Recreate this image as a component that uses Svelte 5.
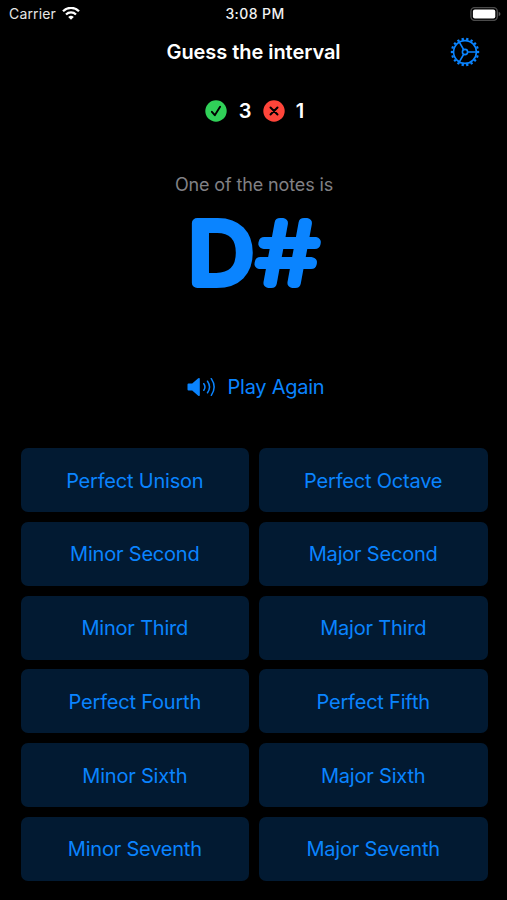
<script>
  const intervals = [
    'Perfect Unison', 'Perfect Octave',
    'Minor Second', 'Major Second',
    'Minor Third', 'Major Third',
    'Perfect Fourth', 'Perfect Fifth',
    'Minor Sixth', 'Major Sixth',
    'Minor Seventh', 'Major Seventh'
  ];
  const correct = 3;
  const wrong = 1;
  const teeth = Array.from({ length: 18 }, (_, i) => i * 20);
</script>

<main class="screen">
  <div class="status">
    <div class="carrier">
      <span>Carrier</span>
      <svg width="18" height="14" viewBox="0 0 18 14" fill="none" stroke="#fff" stroke-width="2.3">
        <path d="M1 4.2A11.3 11.3 0 0 1 17 4.2" />
        <path d="M4 7.5A7.1 7.1 0 0 1 14 7.5" />
        <path d="M9 12.8L6.2 10A4 4 0 0 1 11.8 10Z" fill="#fff" stroke="none" />
      </svg>
    </div>
    <time>3:08 PM</time>
    <svg class="battery" width="31" height="14" viewBox="0 0 31 14">
      <rect x="0.9" y="0.6" width="26.4" height="12.8" rx="3.8" fill="#000" stroke="#4b4b4b" stroke-width="1.4" />
      <rect x="2.9" y="2.5" width="22.4" height="9" rx="2" fill="#fff" />
      <path d="M28.7 4.8Q30.5 5.5 30.5 7T28.7 9.2Z" fill="#5a5a5a" />
    </svg>
  </div>

  <header>
    <h1>Guess the interval</h1>
    <button class="settings" aria-label="Settings">
      <svg width="30" height="30" viewBox="-15 -15 30 30" fill="none" stroke="#0a84ff" stroke-width="1.6">
        <circle r="11.4" />
        <circle r="2.6" />
        <path d="M2.6 0H11.6M-1.3 -2.25L-5.8 -10.05M-1.3 2.25L-5.8 10.05" />
        {#each teeth as angle}
          <path d="M12 0H14.2" stroke-width="2.3" transform="rotate({angle})" />
        {/each}
      </svg>
    </button>
  </header>

  <div class="score">
    <svg width="22" height="22" viewBox="0 0 22 22" fill="none">
      <circle cx="11" cy="11" r="10.7" fill="#30d158" />
      <path d="M6.9 11.8L9.8 15.2L15.1 6.8" stroke="#000" stroke-width="1.9" stroke-linecap="round" stroke-linejoin="round" />
    </svg>
    <span class="right">{correct}</span>
    <svg width="22" height="22" viewBox="0 0 22 22" fill="none">
      <circle cx="11" cy="11" r="10.7" fill="#ff453a" />
      <path d="M7.5 7.5L14.5 14.5M14.5 7.5L7.5 14.5" stroke="#000" stroke-width="2" stroke-linecap="round" />
    </svg>
    <span class="wrong">{wrong}</span>
  </div>

  <p class="hint">One of the notes is</p>

  <svg class="note" width="140" height="84" viewBox="0 0 140 84">
    <text transform="translate(4.8 71.5) scale(1.09 1)" class="letter">D</text>
    <text transform="translate(74 71.8) scale(1.13 1)" class="sharp">#</text>
  </svg>

  <button class="play">
    <svg width="30" height="22" viewBox="0 0 30 22" fill="none" stroke="#0a84ff" stroke-width="1.5" stroke-linecap="round">
      <path d="M1.5 7.4H5.2L11.2 2.3Q12.8 1.4 12.8 3V19Q12.8 20.6 11.2 19.7L5.2 14.6H1.5Q.5 14.6 .5 13.6V8.4Q.5 7.4 1.5 7.4Z" fill="#0a84ff" stroke="none" />
      <path d="M16.8 7.7Q19.1 11 16.8 14.3M20.5 5.2Q24.6 11 20.5 16.8M24.3 2.7Q30 11 24.3 19.3" />
    </svg>
    <span>Play Again</span>
  </button>

  <div class="grid">
    {#each intervals as name}
      <button class="choice">{name}</button>
    {/each}
  </div>
</main>

<style>
  :global(body) { margin: 0; background: #000; }
  .screen {
    width: 507px;
    height: 900px;
    overflow: hidden;
    background: #000;
    color: #fff;
    font-family: Inter, "Liberation Sans", sans-serif;
    display: flex;
    flex-direction: column;
    align-items: center;
  }
  button { border: 0; padding: 0; background: none; font: inherit; color: #0a84ff; }
  svg { display: block; flex: none; }
  .status {
    width: 100%;
    height: 27px;
    box-sizing: border-box;
    padding: 0 6px 0 9px;
    display: grid;
    grid-template-columns: 1fr auto 1fr;
    align-items: center;
    font-size: 14px;
  }
  .carrier { display: flex; align-items: center; gap: 6px; color: #e6e6e6; letter-spacing: 0.15px; }
  time { font-weight: 500; font-size: 14px; letter-spacing: 0.4px; color: #f2f2f2; }
  .battery { justify-self: end; }
  header {
    width: 100%;
    height: 50px;
    display: grid;
    grid-template-columns: 1fr auto 1fr;
    align-items: center;
  }
  h1 { grid-column: 2; margin: 0; font-size: 20px; font-weight: 600; letter-spacing: -0.05px; }
  .settings { justify-self: end; margin-right: 27px; }
  .score {
    height: 26px;
    margin: 21px 0 0 2px;
    display: flex;
    align-items: center;
    font-size: 20px;
    font-weight: 600;
  }
  .right { width: 13px; margin: 0 11px 0 12px; }
  .wrong { margin-left: 11px; }
  .hint { margin: 49px 0 0 1px; height: 24px; line-height: 24px; font-size: 18px; letter-spacing: -0.13px; color: #818185; }
  .note { margin-top: 14px; overflow: visible; }
  .note text {
    font-size: 82px;
    fill: #0a84ff;
    stroke: #0a84ff;
    stroke-width: 10px;
    stroke-linejoin: round;
    stroke-linecap: round;
  }
  .letter { font-weight: 300; }
  .note .sharp { font-weight: 100; font-size: 83px; stroke-width: 10px; }
  .play {
    margin: 77px 0 0 4px;
    height: 30px;
    display: flex;
    align-items: center;
    gap: 11px;
    font-size: 20px;
    letter-spacing: -0.25px;
  }
  .grid {
    width: 467px;
    margin: 46px 0 0 1px;
    display: grid;
    grid-template-columns: 1fr 1fr;
    grid-auto-rows: 64px;
    gap: 9.75px;
  }
  .choice { border-radius: 7px; background: #021a32; font-size: 20px; letter-spacing: -0.2px; padding-top: 1px; }
</style>
